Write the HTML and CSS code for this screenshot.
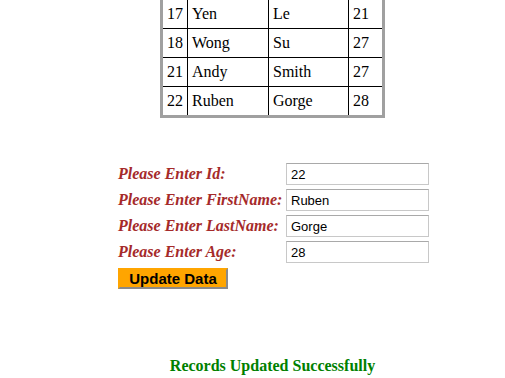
FILE: index.html
```html
<!DOCTYPE html>
<html lang="en">
<head>
    <meta charset="UTF-8">
    <title>Update Records</title>
    <link rel="stylesheet" href="styles.css">
</head>
<body>

<div class="page">
    <table class="records">
        <colgroup>
            <col class="c-id">
            <col class="c-first">
            <col class="c-last">
            <col class="c-age">
        </colgroup>
        <tbody>
        <tr><td>17</td><td>Yen</td><td>Le</td><td>21</td></tr>
        <tr><td>18</td><td>Wong</td><td>Su</td><td>27</td></tr>
        <tr><td>21</td><td>Andy</td><td>Smith</td><td>27</td></tr>
        <tr><td>22</td><td>Ruben</td><td>Gorge</td><td>28</td></tr>
        </tbody>
    </table>

    <form class="update-form">
        <label for="rec-id">Please Enter Id:</label>
        <input type="text" id="rec-id" value="22">

        <label for="rec-first">Please Enter FirstName:</label>
        <input type="text" id="rec-first" value="Ruben">

        <label for="rec-last">Please Enter LastName:</label>
        <input type="text" id="rec-last" value="Gorge">

        <label for="rec-age">Please Enter Age:</label>
        <input type="text" id="rec-age" value="28">

        <button type="button" class="update-btn">Update Data</button>
    </form>

    <p class="message">Records Updated Successfully</p>
</div>

</body>
</html>
```

FILE: styles.css
```css
html {
    overflow: hidden;
}
body {
    margin: 0;
    font-family: "Liberation Serif", "Times New Roman", serif;
    font-size: 16px;
    background-color: white;
}
.page {
    box-sizing: border-box;
    width: 505px;
    padding-left: 40px;
    display: flex;
    flex-direction: column;
    align-items: center;
}
.records {
    border-collapse: collapse;
    table-layout: fixed;
    border: 3px solid #a0a0a0;
    border-top: none;
    width: 225px;
}
.c-id {
    width: 26px;
}
.c-first {
    width: 81px;
}
.c-last {
    width: 80px;
}
.records td {
    border: 1px solid black;
    height: 28px;
    padding: 0 4px;
    text-align: left;
}
.records tr:first-child td {
    border-top: none;
}
.update-form {
    margin-top: 45px;
    margin-left: 2px;
    display: grid;
    grid-template-columns: 168px 143px;
    row-gap: 4px;
    align-items: center;
}
.update-form label {
    color: #a52a2a;
    font-weight: bold;
    font-style: italic;
}
.update-form input {
    box-sizing: border-box;
    width: 143px;
    height: 22px;
    margin: 0;
    padding: 1px 4px;
    border: 1px solid #c8c8c8;
    border-top-color: #a9a9a9;
    font-family: "Liberation Sans", Arial, sans-serif;
    font-size: 13px;
    color: black;
}
.update-btn {
    grid-column: 1;
    justify-self: start;
    margin-top: 1px;
    width: 110px;
    height: 21px;
    padding: 0;
    background-color: orange;
    color: black;
    border: 2px solid orange;
    border-right-color: #8a8a8a;
    border-bottom-color: #8a8a8a;
    font-family: "Liberation Sans", Arial, sans-serif;
    font-size: 15px;
    font-weight: bold;
}
.message {
    margin-top: 68px;
    color: green;
    font-weight: bold;
}
```
